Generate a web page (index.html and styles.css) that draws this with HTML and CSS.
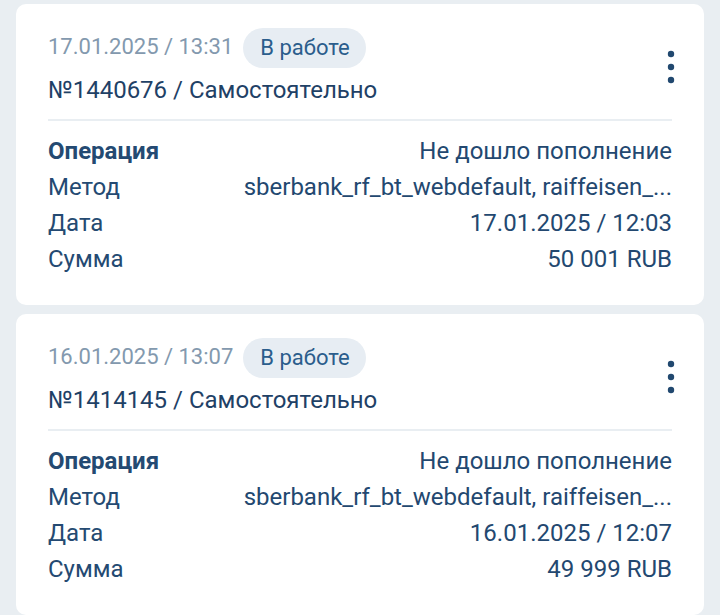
FILE: index.html
```html
<!DOCTYPE html>
<html lang="ru">
<head>
<meta charset="utf-8">
<link rel="stylesheet" href="styles.css">
</head>
<body>
<div class="list">
  <section class="card">
    <div class="head">
      <div class="head-main">
        <div class="meta">
          <span class="date">17.01.2025 / 13:31</span>
          <span class="badge">В работе</span>
        </div>
        <div class="num">№1440676 / Самостоятельно</div>
      </div>
      <svg class="menu" width="8" height="34" viewBox="0 0 8 34"><circle cx="4" cy="4" r="3.2"/><circle cx="4" cy="17" r="3.2"/><circle cx="4" cy="30" r="3.2"/></svg>
    </div>
    <div class="rows">
      <div class="row"><span class="label strong">Операция</span><span class="val">Не дошло пополнение</span></div>
      <div class="row"><span class="label">Метод</span><span class="val">sberbank_rf_bt_webdefault, raiffeisen_...</span></div>
      <div class="row"><span class="label">Дата</span><span class="val">17.01.2025 / 12:03</span></div>
      <div class="row"><span class="label">Сумма</span><span class="val">50 001 RUB</span></div>
    </div>
  </section>
  <section class="card">
    <div class="head">
      <div class="head-main">
        <div class="meta">
          <span class="date">16.01.2025 / 13:07</span>
          <span class="badge">В работе</span>
        </div>
        <div class="num">№1414145 / Самостоятельно</div>
      </div>
      <svg class="menu" width="8" height="34" viewBox="0 0 8 34"><circle cx="4" cy="4" r="3.2"/><circle cx="4" cy="17" r="3.2"/><circle cx="4" cy="30" r="3.2"/></svg>
    </div>
    <div class="rows">
      <div class="row"><span class="label strong">Операция</span><span class="val">Не дошло пополнение</span></div>
      <div class="row"><span class="label">Метод</span><span class="val">sberbank_rf_bt_webdefault, raiffeisen_...</span></div>
      <div class="row"><span class="label">Дата</span><span class="val">16.01.2025 / 12:07</span></div>
      <div class="row"><span class="label">Сумма</span><span class="val">49 999 RUB</span></div>
    </div>
  </section>
</div>
</body>
</html>
```
FILE: styles.css
```css
html, body {
  margin: 0;
  padding: 0;
  background: #e9eef2;
}
body {
  font-family: Roboto, "Noto Sans", sans-serif;
  font-size: 24px;
  color: #234870;
}
.list {
  display: flex;
  flex-direction: column;
  gap: 9px;
  padding: 4px 16px;
}
.card {
  background: #ffffff;
  border-radius: 10px;
  padding: 24px 32px 28px 32px;
}
.head {
  display: flex;
  justify-content: space-between;
  align-items: center;
  border-bottom: 2px solid #e9eef2;
  padding-bottom: 14px;
}
.meta {
  display: flex;
  align-items: center;
  gap: 10px;
  font-size: 22px;
}
.date {
  color: #8399ae;
  margin-top: -3px;
}
.badge {
  background: #e7edf3;
  color: #2b5d8c;
  height: 40px;
  line-height: 40px;
  padding: 0 16px 0 17px;
  border-radius: 20px;
}
.num {
  line-height: 30px;
  margin-top: 7px;
  color: #1f4166;
}
.menu {
  fill: #21486f;
  margin-right: -3px;
}
.rows {
  padding-top: 12px;
}
.row {
  display: flex;
  justify-content: space-between;
  line-height: 36px;
}
.label {
  color: #244a72;
}
.strong {
  font-weight: 700;
}
.val {
  color: #234870;
}
```
